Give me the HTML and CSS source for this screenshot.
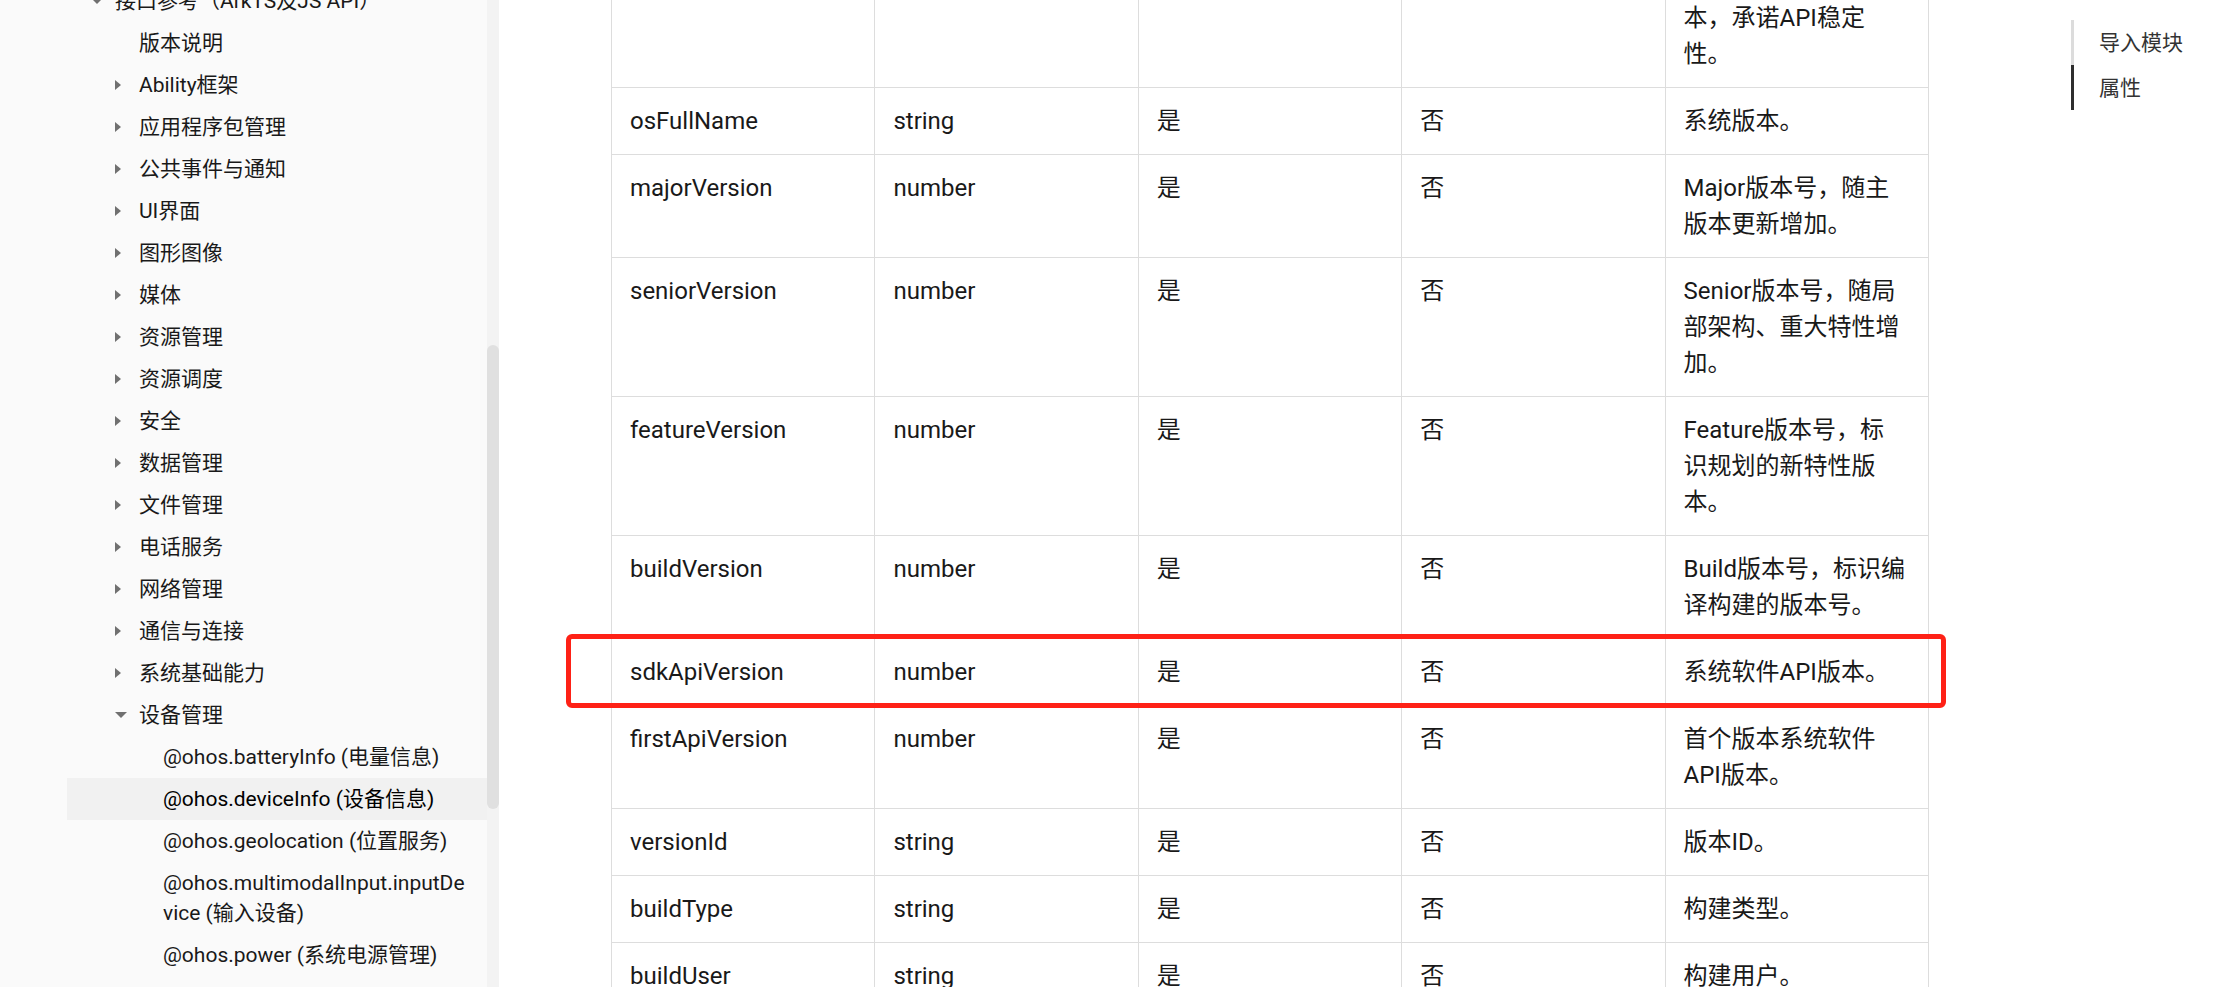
FILE: index.html
```html
<!DOCTYPE html>
<html>
<head>
    <meta charset="UTF-8">
    <title>@ohos.deviceInfo (设备信息)</title>
    <link rel="stylesheet" href="styles.css">
</head>
<body>

<div class="page">

    <aside class="sidebar">
        <ul class="nav">
            <li class="nav-item lvl-1 open"><span class="caret"></span><span class="label">接口参考（ArkTS及JS API）</span></li>
            <li class="nav-item lvl-2"><span class="caret"></span><span class="label">版本说明</span></li>
            <li class="nav-item lvl-2 closed"><span class="caret"></span><span class="label">Ability框架</span></li>
            <li class="nav-item lvl-2 closed"><span class="caret"></span><span class="label">应用程序包管理</span></li>
            <li class="nav-item lvl-2 closed"><span class="caret"></span><span class="label">公共事件与通知</span></li>
            <li class="nav-item lvl-2 closed"><span class="caret"></span><span class="label">UI界面</span></li>
            <li class="nav-item lvl-2 closed"><span class="caret"></span><span class="label">图形图像</span></li>
            <li class="nav-item lvl-2 closed"><span class="caret"></span><span class="label">媒体</span></li>
            <li class="nav-item lvl-2 closed"><span class="caret"></span><span class="label">资源管理</span></li>
            <li class="nav-item lvl-2 closed"><span class="caret"></span><span class="label">资源调度</span></li>
            <li class="nav-item lvl-2 closed"><span class="caret"></span><span class="label">安全</span></li>
            <li class="nav-item lvl-2 closed"><span class="caret"></span><span class="label">数据管理</span></li>
            <li class="nav-item lvl-2 closed"><span class="caret"></span><span class="label">文件管理</span></li>
            <li class="nav-item lvl-2 closed"><span class="caret"></span><span class="label">电话服务</span></li>
            <li class="nav-item lvl-2 closed"><span class="caret"></span><span class="label">网络管理</span></li>
            <li class="nav-item lvl-2 closed"><span class="caret"></span><span class="label">通信与连接</span></li>
            <li class="nav-item lvl-2 closed"><span class="caret"></span><span class="label">系统基础能力</span></li>
            <li class="nav-item lvl-2 open"><span class="caret"></span><span class="label">设备管理</span></li>
            <li class="nav-item lvl-3"><span class="caret"></span><span class="label">@ohos.batteryInfo (电量信息)</span></li>
            <li class="nav-item lvl-3 active"><span class="caret"></span><span class="label">@ohos.deviceInfo (设备信息)</span></li>
            <li class="nav-item lvl-3"><span class="caret"></span><span class="label">@ohos.geolocation (位置服务)</span></li>
            <li class="nav-item lvl-3"><span class="caret"></span><span class="label">@ohos.multimodalInput.inputDevice (输入设备)</span></li>
            <li class="nav-item lvl-3"><span class="caret"></span><span class="label">@ohos.power (系统电源管理)</span></li>
            <li class="nav-item lvl-3"><span class="caret"></span><span class="label">@ohos.runningLock (Runninglock锁)</span></li>
        </ul>
        <div class="scrollbar"><div class="thumb"></div></div>
    </aside>

    <main class="content">
        <div class="table-wrap">
            <table class="props">
                <tr class="cut">
                    <td></td><td></td><td></td><td></td>
                    <td>本，承诺API稳定性。</td>
                </tr>
                <tr><td>osFullName</td><td>string</td><td>是</td><td>否</td><td>系统版本。</td></tr>
                <tr><td>majorVersion</td><td>number</td><td>是</td><td>否</td><td>Major版本号，随主版本更新增加。</td></tr>
                <tr><td>seniorVersion</td><td>number</td><td>是</td><td>否</td><td>Senior版本号，随局部架构、重大特性增加。</td></tr>
                <tr><td>featureVersion</td><td>number</td><td>是</td><td>否</td><td>Feature版本号，标识规划的新特性版本。</td></tr>
                <tr><td>buildVersion</td><td>number</td><td>是</td><td>否</td><td>Build版本号，标识编译构建的版本号。</td></tr>
                <tr><td>sdkApiVersion</td><td>number</td><td>是</td><td>否</td><td>系统软件API版本。</td></tr>
                <tr><td>firstApiVersion</td><td>number</td><td>是</td><td>否</td><td>首个版本系统软件API版本。</td></tr>
                <tr><td>versionId</td><td>string</td><td>是</td><td>否</td><td>版本ID。</td></tr>
                <tr><td>buildType</td><td>string</td><td>是</td><td>否</td><td>构建类型。</td></tr>
                <tr><td>buildUser</td><td>string</td><td>是</td><td>否</td><td>构建用户。</td></tr>
                <tr><td>buildHost</td><td>string</td><td>是</td><td>否</td><td>构建主机。</td></tr>
            </table>
            <div class="mark"></div>
        </div>
    </main>

    <nav class="toc">
        <ul>
            <li>导入模块</li>
            <li class="active">属性</li>
        </ul>
    </nav>

</div>

</body>
</html>
```

FILE: styles.css
```css
html,
body {
    margin: 0;
    padding: 0;
}

body {
    font-family: Roboto, "Noto Sans CJK SC", sans-serif;
    color: #191919;
    background: #fff;
    overflow: hidden;
}

.page {
    display: flex;
    height: 987px;
    overflow: hidden;
}

/* left tree */

.sidebar {
    flex: none;
    display: flex;
    width: 499px;
    background: #fafafa;
    overflow: hidden;
}

.nav {
    flex: none;
    width: 487px;
    list-style: none;
    margin: -20px 0 0;
    padding: 0;
}

.nav-item {
    display: flex;
    margin-left: 67px;
    padding: 6px 18px 6px 0;
    font-size: 21px;
    line-height: 30px;
}

.lvl-1 { padding-left: 24px; }
.lvl-2 { padding-left: 48px; }
.lvl-3 { padding-left: 72px; }

.caret {
    flex: none;
    display: flex;
    align-items: center;
    width: 24px;
    height: 30px;
}

.closed .caret:before {
    content: "";
    border-left: 6px solid #707070;
    border-top: 5px solid transparent;
    border-bottom: 5px solid transparent;
}

.open .caret:before {
    content: "";
    border-top: 6px solid #707070;
    border-left: 6px solid transparent;
    border-right: 6px solid transparent;
}

.label {
    min-width: 0;
    word-break: break-all;
}

.nav-item.active {
    background: #f1f1f1;
    color: #000;
}

.scrollbar {
    flex: none;
    width: 12px;
    background: #f3f3f3;
}

.thumb {
    margin-top: 345px;
    height: 464px;
    border-radius: 6px;
    background: #e0e0e0;
}

/* table */

.content {
    flex: none;
    padding-left: 112px;
}

.table-wrap {
    position: relative;
    width: 1318px;
}

.props {
    width: 1318px;
    border-collapse: collapse;
    table-layout: fixed;
    font-size: 24px;
    line-height: 36px;
}

.props td {
    border: 1px solid #dddddd;
    padding: 15px 22px 15px 18px;
    vertical-align: top;
    overflow-wrap: break-word;
}

.props .cut td {
    border-top: none;
    padding-top: 0;
}

.mark {
    position: absolute;
    left: -45px;
    top: 634px;
    width: 1380px;
    height: 74px;
    box-sizing: border-box;
    border: 5px solid #fe2116;
    border-radius: 6px;
}

/* right toc */

.toc {
    flex: none;
    margin-left: 142px;
    padding-top: 20px;
}

.toc ul {
    list-style: none;
    margin: 0;
    padding: 0;
}

.toc li {
    padding: 8px 0 6px 25px;
    border-left: 3px solid #dcdcdc;
    font-size: 21px;
    line-height: 31px;
    color: #333;
}

.toc li.active {
    border-left-color: #2e2e2e;
}
```
